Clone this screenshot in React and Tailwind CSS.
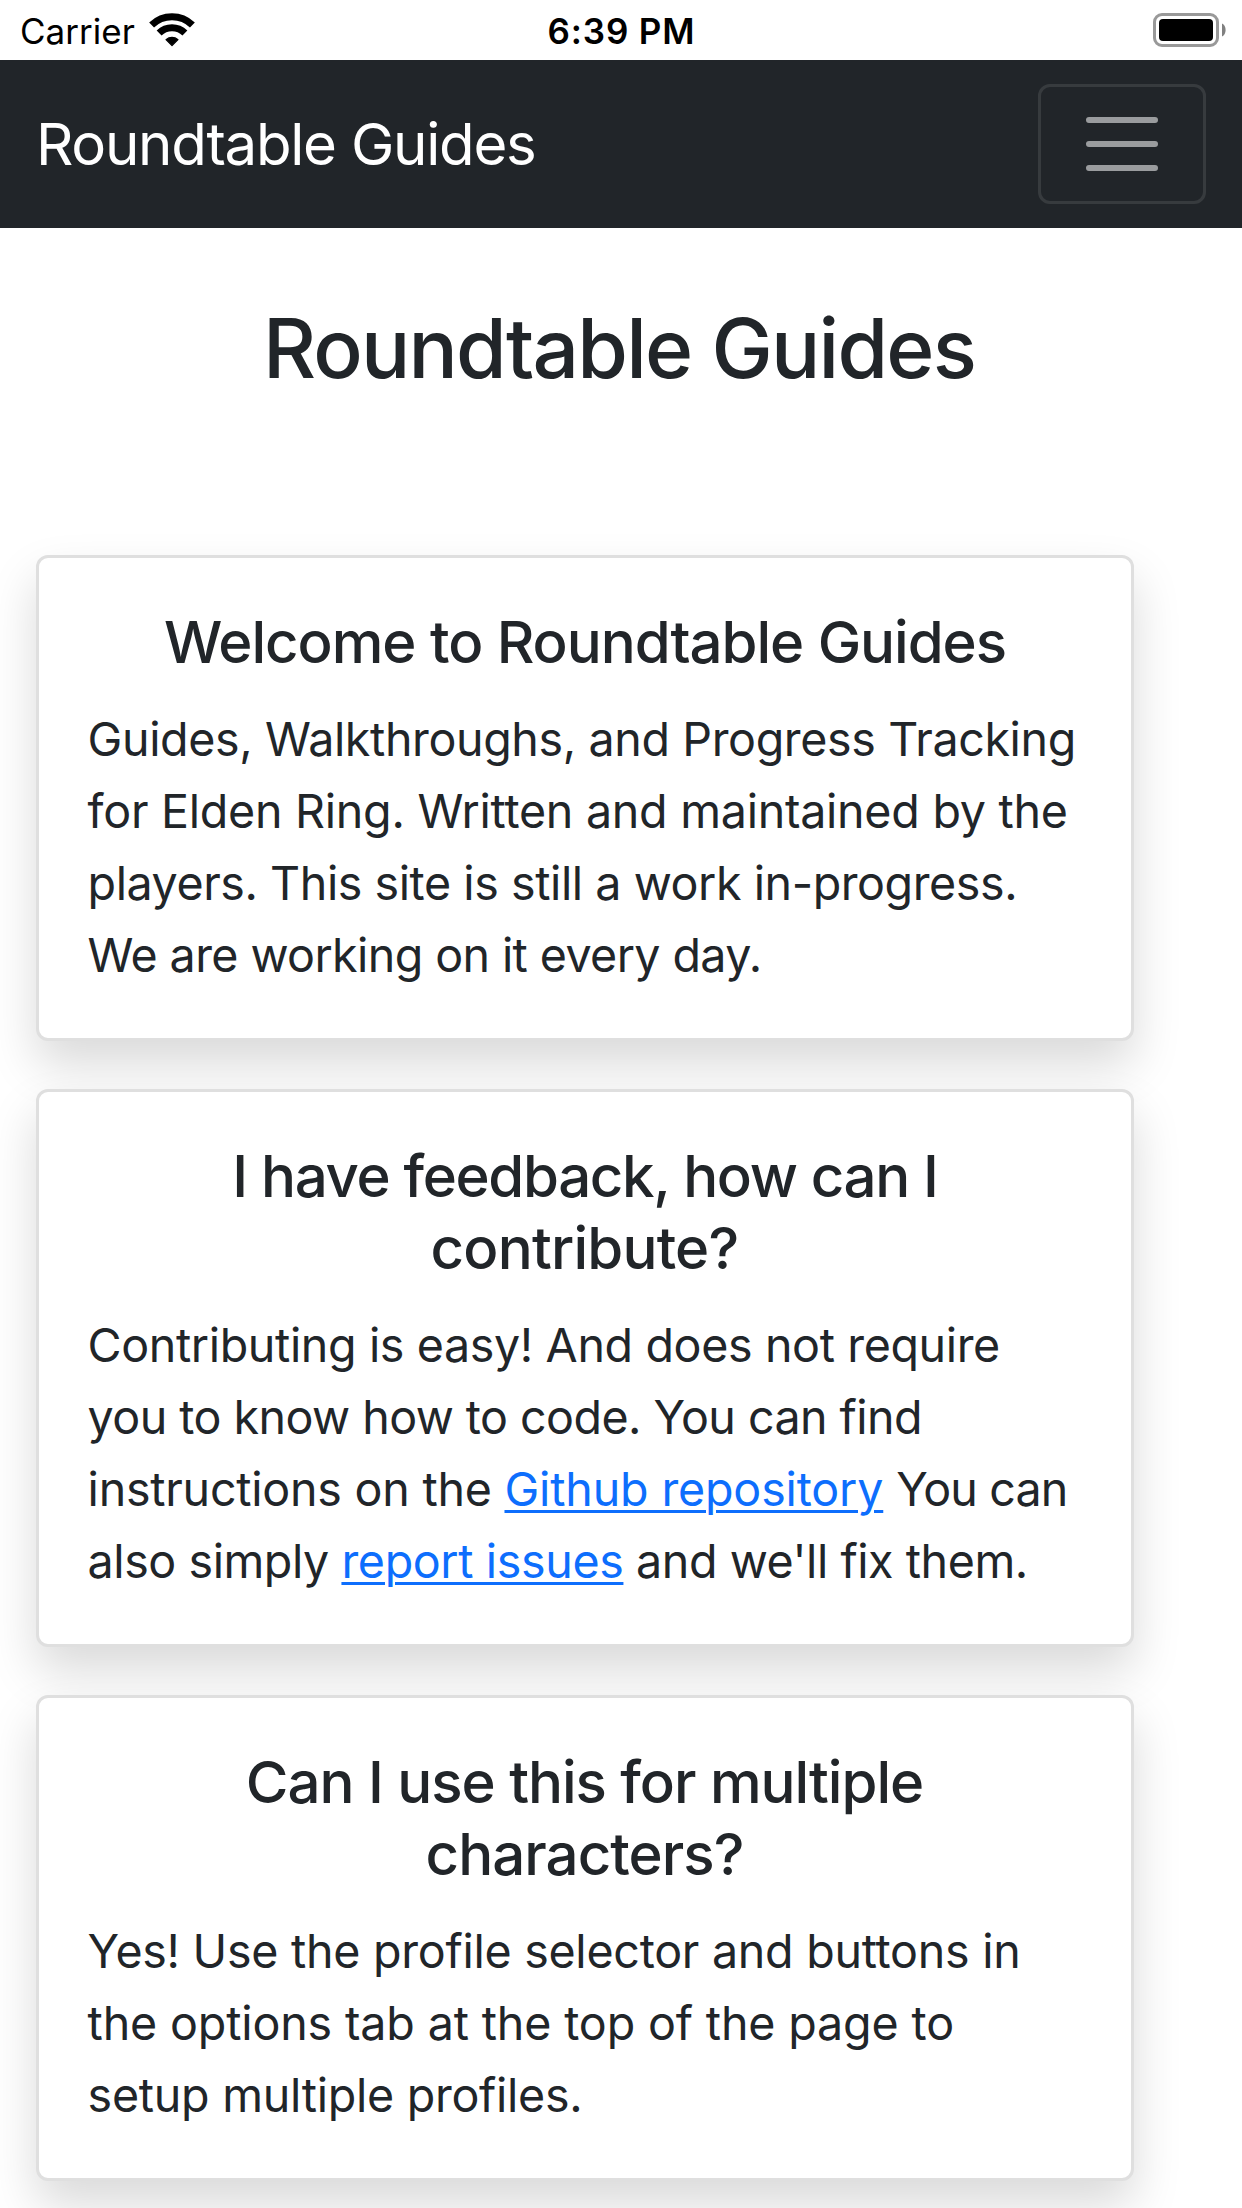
function WifiIcon() {
  return (
    <svg width="46" height="34" viewBox="0 0 46 34" fill="none" stroke="#000" strokeWidth="7">
      <path d="M2.6 12.1A29.3 29.3 0 0 1 43.4 12.1" />
      <path d="M10.1 20A18.4 18.4 0 0 1 35.9 20" />
      <path
        d="M17 26.6A9.4 9.4 0 0 1 29 26.6L23 32.6Z"
        fill="#000"
        strokeWidth="1.2"
        strokeLinejoin="round"
      />
    </svg>
  );
}

function BatteryIcon() {
  return (
    <svg width="74" height="34" viewBox="0 0 74 34">
      <rect x="1.5" y="1.5" width="63" height="31" rx="7.5" fill="none" stroke="#999" strokeWidth="3" />
      <rect x="6" y="6" width="54" height="22" rx="4" fill="#000" />
      <path d="M69 10.5C73.8 12.5 73.8 21.5 69 23.5Z" fill="#808080" />
    </svg>
  );
}

function StatusBar() {
  return (
    <div className="grid h-[60px] grid-cols-3 items-center text-[35px] leading-[58px] text-black">
      <div className="flex items-center gap-[14px] pl-[20px]">
        <span className="pt-[2px] tracking-[0.04px]">Carrier</span>
        <span className="mt-[-1px]">
          <WifiIcon />
        </span>
      </div>
      <div className="pt-[2px] pl-px text-center font-semibold tracking-[0.85px]">6:39 PM</div>
      <div className="flex justify-end pr-[15px]">
        <BatteryIcon />
      </div>
    </div>
  );
}

function Navbar() {
  return (
    <nav className="flex h-[168px] items-center justify-between bg-[#212529] px-[36px]">
      <a className="text-[58.2px] leading-[90px] tracking-[-1.26px] text-white">Roundtable Guides</a>
      <button
        aria-label="Toggle navigation"
        className="flex h-[120px] w-[168px] items-center justify-center rounded-[12px] border-[3px] border-white/10"
      >
        <svg width="90" height="90" viewBox="0 0 30 30">
          <path
            stroke="#fff"
            strokeOpacity="0.55"
            strokeLinecap="round"
            strokeMiterlimit="10"
            strokeWidth="2"
            d="M4 7h22M4 15h22M4 23h22"
          />
        </svg>
      </button>
    </nav>
  );
}

function Card({ title, children }) {
  return (
    <section className="rounded-[12px] border-[3px] border-[#dfdfdf] bg-white p-[48px] shadow-[0_24px_48px_rgba(0,0,0,0.15)]">
      <h5 className="text-center text-[58.2px] leading-[72px] font-medium whitespace-nowrap">{title}</h5>
      <p className="mt-[25px] mb-[-1px] pl-[0.6px] text-[46.6px] leading-[72px] whitespace-nowrap">{children}</p>
    </section>
  );
}

function Link({ className, children }) {
  return (
    <a className={`text-[#0d6efd] underline decoration-[3px] underline-offset-[4px] ${className}`}>
      {children}
    </a>
  );
}

export default function App() {
  return (
    <div className="h-[2208px] w-[1242px] overflow-hidden bg-white font-['Inter','Liberation_Sans',sans-serif] text-[#212529]">
      <StatusBar />
      <Navbar />
      <h1 className="mb-[155px] pt-[70px] pr-[4px] text-center text-[82px] leading-[102px] font-medium tracking-[-1.8px]">
        Roundtable Guides
      </h1>
      <main className="ml-[36px] flex w-[1098px] flex-col gap-[48px]">
        <Card title={<span className="tracking-[-1.04px]">Welcome to Roundtable Guides</span>}>
          <span className="block tracking-[-0.38px]">Guides, Walkthroughs, and Progress Tracking</span>
          <span className="block tracking-[-0.26px]">for Elden Ring. Written and maintained by the</span>
          <span className="block tracking-[-0.43px]">players. This site is still a work in-progress.</span>
          <span className="block tracking-[-0.6px]">We are working on it every day.</span>
        </Card>
        <Card
          title={
            <>
              <span className="block tracking-[-1.34px]">I have feedback, how can I</span>
              <span className="block pr-px tracking-[-0.79px]">contribute?</span>
            </>
          }
        >
          <span className="block tracking-[-0.37px]">Contributing is easy! And does not require</span>
          <span className="block tracking-[-0.55px]">you to know how to code. You can find</span>
          <span className="block tracking-[-0.24px]">
            instructions on the <Link className="tracking-[-0.16px]">Github repository</Link>{" "}
            <span className="tracking-[-0.88px]">You can</span>
          </span>
          <span className="block tracking-[-0.44px]">
            also simply <Link className="tracking-[-0.37px]">report issues</Link> and we'll fix them.
          </span>
        </Card>
        <Card
          title={
            <>
              <span className="block pr-px tracking-[-1.03px]">Can I use this for multiple</span>
              <span className="block pr-px tracking-[-0.95px]">characters?</span>
            </>
          }
        >
          <span className="block tracking-[-0.27px]">Yes! Use the profile selector and buttons in</span>
          <span className="block tracking-[-0.15px]">the options tab at the top of the page to</span>
          <span className="block tracking-[-0.27px]">setup multiple profiles.</span>
        </Card>
      </main>
    </div>
  );
}
